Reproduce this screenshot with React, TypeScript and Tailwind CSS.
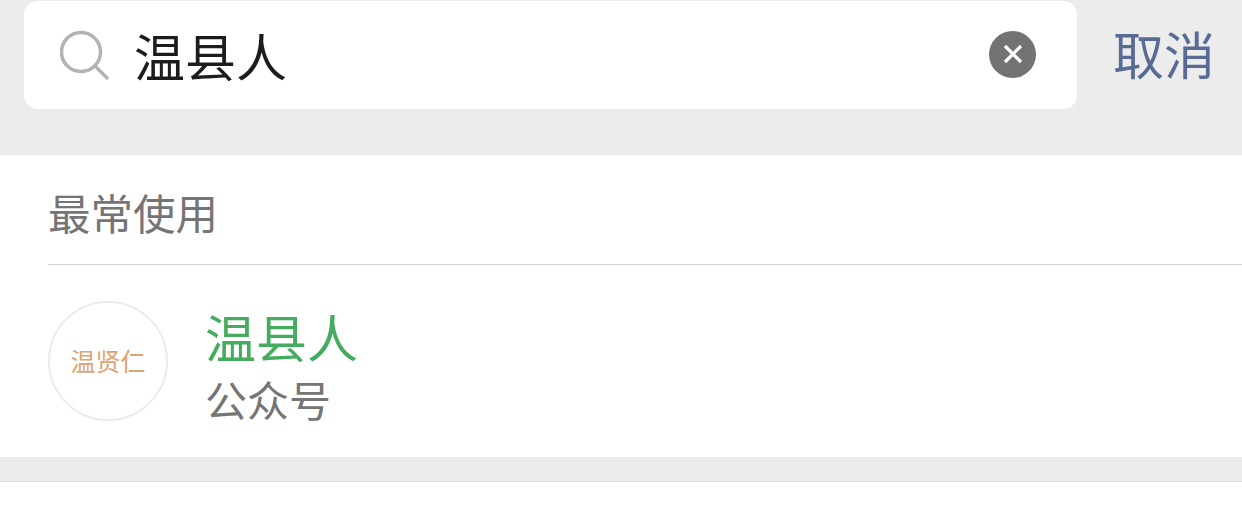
const cjk = "font-['Noto_Sans_CJK_SC','Liberation_Sans',sans-serif]";

function SearchIcon() {
  return (
    <svg width="50" height="50" viewBox="0 0 50 50" fill="none" stroke="#b3b3b3" strokeWidth="3.5">
      <circle cx="21" cy="22" r="19.5" />
      <path d="M35 36 L48 49" />
    </svg>
  );
}

function ClearIcon() {
  return (
    <div className="mb-[2px] flex h-[47px] w-[47px] items-center justify-center rounded-full bg-[#737373]">
      <svg width="20" height="20" viewBox="0 0 20 20" stroke="#ffffff" strokeWidth="3.2">
        <path d="M2 2 L18 18 M18 2 L2 18" />
      </svg>
    </div>
  );
}

export default function App() {
  return (
    <div className={`flex h-[514px] w-[1242px] flex-col overflow-hidden bg-[#ececec] ${cjk}`}>
      {/* search bar */}
      <div className="flex h-[155px] shrink-0 items-start border-b border-[#e6e6e6] pl-6 pt-px">
        <div className="flex h-[108px] w-[1053px] items-center rounded-[14px] bg-white pl-[36px] pr-[41px]">
          <SearchIcon />
          <span className="ml-[24px] flex-1 text-[51px] leading-none text-[#1c1c1c]">温县人</span>
          <ClearIcon />
        </div>
        <button className="ml-[36px] mt-[24px] text-[51px] leading-[56px] text-[#576b95]">取消</button>
      </div>

      {/* results */}
      <div className="h-[302px] shrink-0 bg-white pl-12">
        <div className="flex h-[110px] items-center border-b border-[#cfcfcf] pt-[6px] text-[42.5px] leading-none text-[#757575]">
          最常使用
        </div>
        <div className="flex items-start pt-[36px]">
          <div className="flex h-[120px] w-[120px] items-center justify-center rounded-full border-2 border-[#ececec] pb-[2px] text-[25px] leading-none text-[#dba473]">
            温贤仁
          </div>
          <div className="ml-[37px] mt-[10px] flex flex-col gap-[16px]">
            <span className="text-[51px] leading-none text-[#45ab5f]">温县人</span>
            <span className="text-[42px] leading-none text-[#757575]">公众号</span>
          </div>
        </div>
      </div>

      <div className="h-[25px] shrink-0 border-b border-[#e0e0e0]" />
      <div className="flex-1 bg-white" />
    </div>
  );
}
